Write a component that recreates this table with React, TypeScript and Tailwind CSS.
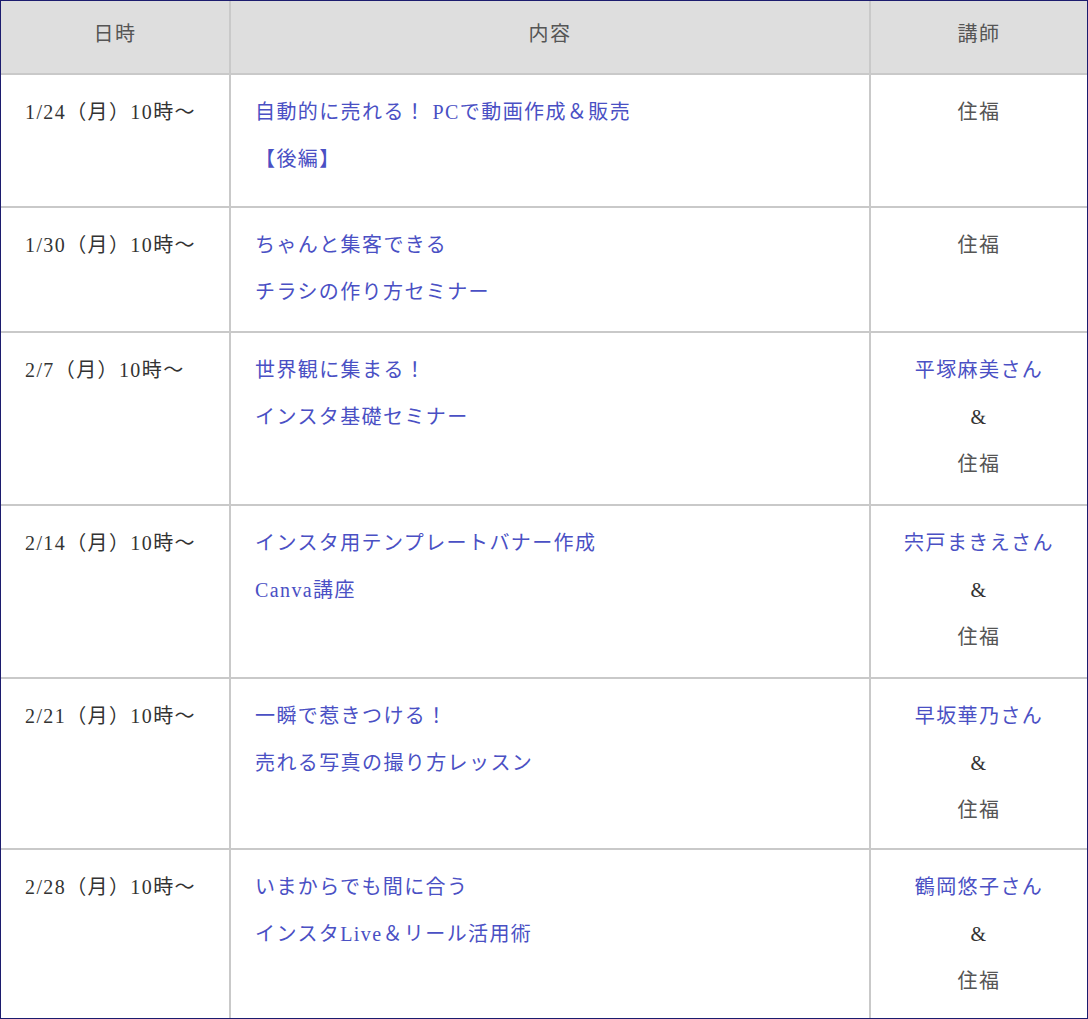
const rows = [
  {
    date: '1/24（月）10時～',
    title: ['自動的に売れる！ PCで動画作成＆販売', '【後編】'],
    guest: null as string | null,
    h: 'h-[133px]',
  },
  {
    date: '1/30（月）10時～',
    title: ['ちゃんと集客できる', 'チラシの作り方セミナー'],
    guest: null,
    h: 'h-[125px]',
  },
  {
    date: '2/7（月）10時～',
    title: ['世界観に集まる！', 'インスタ基礎セミナー'],
    guest: '平塚麻美さん',
    h: 'h-[173px]',
  },
  {
    date: '2/14（月）10時～',
    title: ['インスタ用テンプレートバナー作成', 'Canva講座'],
    guest: '宍戸まきえさん',
    h: 'h-[173px]',
  },
  {
    date: '2/21（月）10時～',
    title: ['一瞬で惹きつける！', '売れる写真の撮り方レッスン'],
    guest: '早坂華乃さん',
    h: 'h-[171px]',
  },
  {
    date: '2/28（月）10時～',
    title: ['いまからでも間に合う', 'インスタLive＆リール活用術'],
    guest: '鶴岡悠子さん',
    h: 'h-[169px]',
  },
];

export default function App() {
  return (
    <div className="w-[1088px] h-[1019px] bg-white border border-[#1c1c6e] overflow-hidden font-['Liberation_Serif','Noto_Sans_CJK_JP',serif] text-[20px] leading-[47px] tracking-[0.07em]">
      <div className="flex h-[74px] bg-[#dedede] border-b-2 border-[#c9c9c9] text-[#555]">
        <div className="w-[230px] border-r-2 border-[#c9c9c9] text-center pt-[10px]">日時</div>
        <div className="w-[640px] border-r-2 border-[#c9c9c9] text-center pt-[10px]">内容</div>
        <div className="flex-1 text-center pt-[10px]">講師</div>
      </div>
      {rows.map((r, i) => (
        <div
          key={r.date}
          className={`flex ${r.h} ${i < rows.length - 1 ? 'border-b-2 border-[#c9c9c9]' : ''}`}
        >
          <div className="w-[230px] border-r-2 border-[#c9c9c9] pl-6 pt-[14px] text-[#333]">
            {r.date}
          </div>
          <div className="w-[640px] border-r-2 border-[#c9c9c9] pl-6 pt-[14px] text-[#4a50c4]">
            {r.title.map((t) => (
              <div key={t}>{t}</div>
            ))}
          </div>
          <div className="flex-1 pt-[14px] text-center">
            {r.guest && (
              <>
                <div className="text-[#4a50c4]">{r.guest}</div>
                <div className="text-[#333]">&amp;</div>
              </>
            )}
            <div className="text-[#555]">住福</div>
          </div>
        </div>
      ))}
    </div>
  );
}
